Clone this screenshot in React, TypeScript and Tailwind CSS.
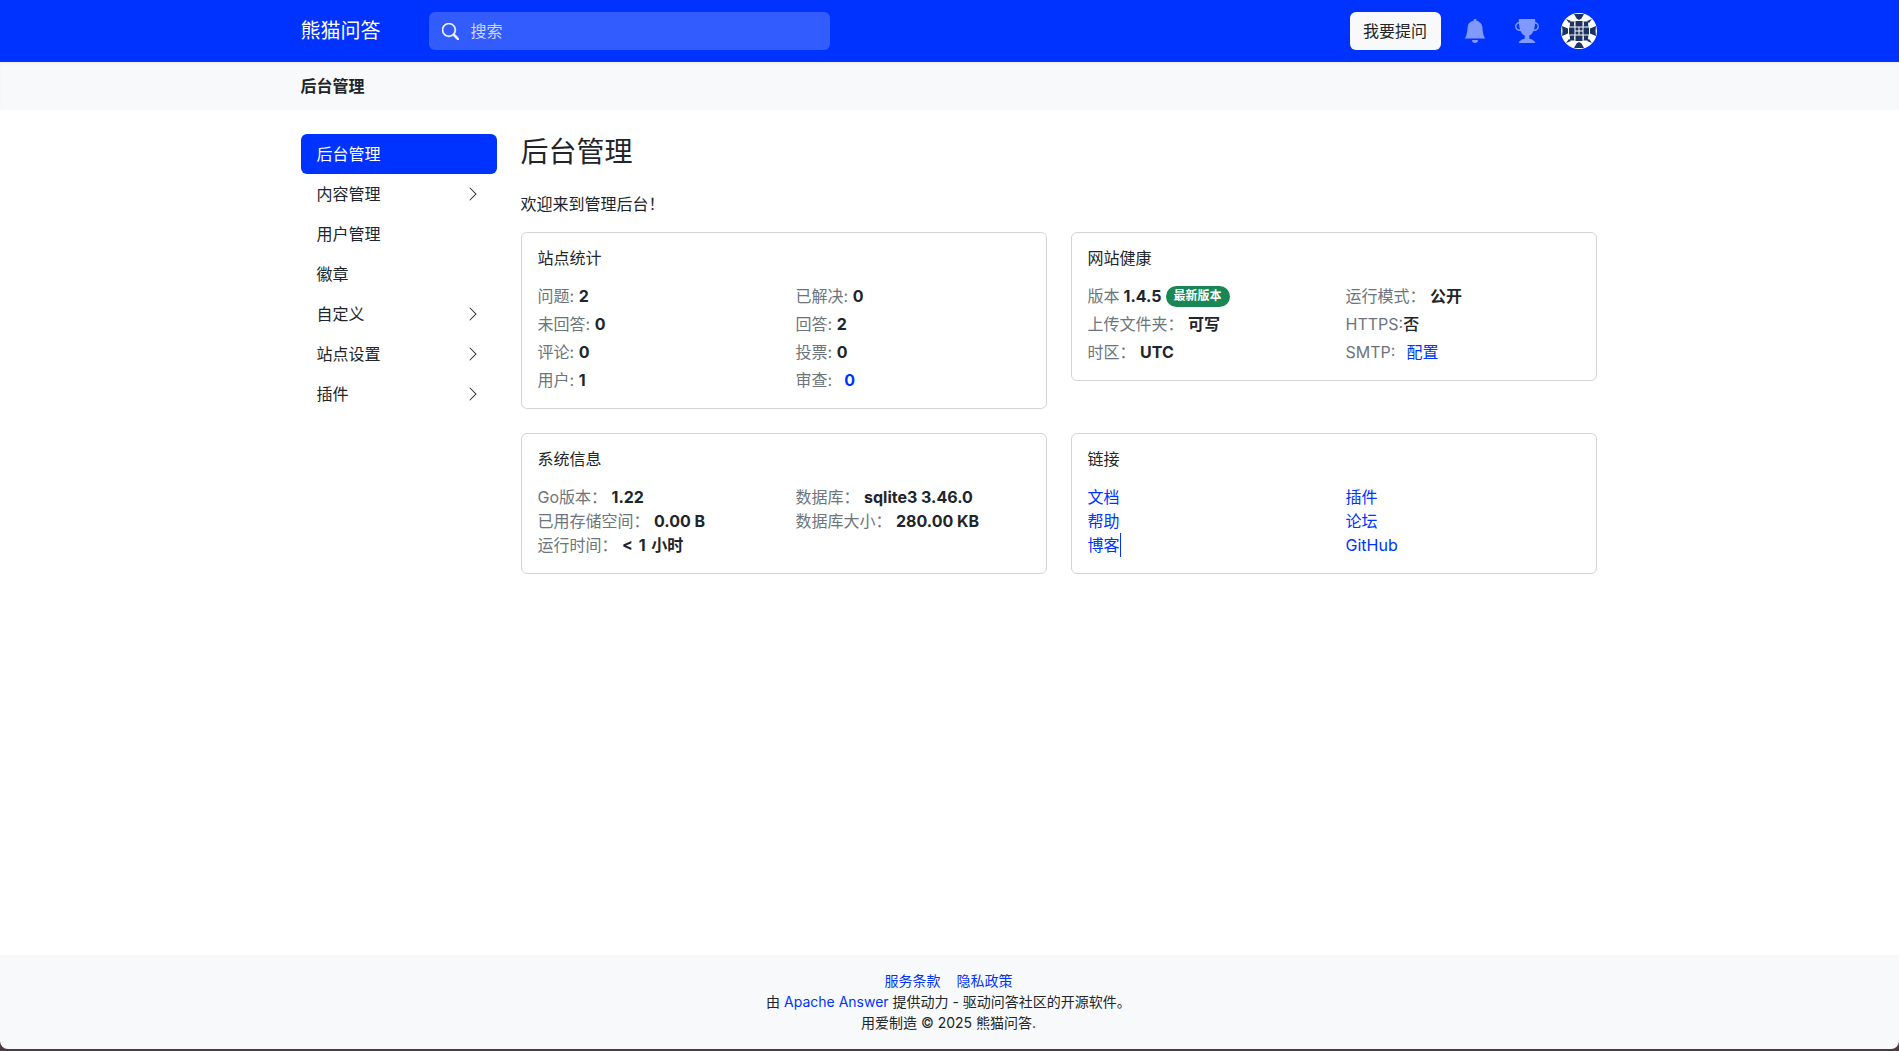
import { BsBellFill, BsChevronRight, BsSearch, BsTrophyFill } from "react-icons/bs";

const sideItems = [
  { label: "后台管理", active: true },
  { label: "内容管理", more: true },
  { label: "用户管理" },
  { label: "徽章" },
  { label: "自定义", more: true },
  { label: "站点设置", more: true },
  { label: "插件", more: true },
];

function Avatar() {
  // quilt style identicon, one quadrant mirrored four times
  const quadrant = (
    <g fill="#1d3461">
      <path d="M13 1h5v6l-2.5-1.5z" />
      <path d="M1 13l6 2.5V18H1.5z" />
      <path d="M5 6l5 2-2 2z" />
      <path d="M8.5 8.5h5l-.5 2.5.5 2.5h-5l.5-2.5z" />
      <path d="M14.5 8h3.5v5.5h-3.5z" />
      <path d="M8 14.5h5.5V18H8z" />
      <path d="M14.5 14.5h3v3h-3z" />
    </g>
  );
  return (
    <svg viewBox="0 0 36 36" className="w-9 h-9 rounded-full bg-white shrink-0">
      {quadrant}
      <g transform="matrix(-1 0 0 1 36 0)">{quadrant}</g>
      <g transform="matrix(1 0 0 -1 0 36)">{quadrant}</g>
      <g transform="matrix(-1 0 0 -1 36 36)">{quadrant}</g>
    </svg>
  );
}

function Card({ title, children }: { title: string; children: React.ReactNode }) {
  return (
    <div className="border border-[#d3d4d5] rounded-md p-4">
      <h6 className="text-base leading-[19.2px] font-normal mb-4">{title}</h6>
      {children}
    </div>
  );
}

function Stat({ label, value, gap }: { label: string; value: React.ReactNode; gap?: boolean }) {
  return (
    <div className="leading-6">
      <span className="text-[#6c757d]">{label}</span>
      {gap ? <span className="inline-block w-3" /> : " "}
      <strong className="font-bold">{value}</strong>
    </div>
  );
}

export default function App() {
  return (
    <div className="[font-family:Inter,'Noto_Sans_CJK_SC',sans-serif] min-h-[1051px] flex flex-col bg-white text-[#212529] text-base overflow-hidden">
      <header className="h-[62px] bg-[#0033ff] shrink-0">
        <div className="w-[1320px] ml-[288.5px] px-3 h-full flex items-center">
          <a className="text-white text-xl w-[128px]">熊猫问答</a>
          <div className="w-[401px] h-[38px] bg-[#335cff] rounded-md flex items-center pl-[13px]">
            <BsSearch className="w-[17px] h-[17px] text-white stroke-[0.5]" />
            <span className="ml-[12px] text-[#ccd6ff]">搜索</span>
          </div>
          <div className="ml-auto flex items-center">
            <button className="h-[38px] w-[91px] bg-[#f8f9fa] rounded-md text-[#212529]">我要提问</button>
            <BsBellFill className="w-6 h-6 text-[#8099ff] ml-[22px]" />
            <BsTrophyFill className="w-6 h-6 text-[#8099ff] ml-[28px]" />
            <div className="ml-[22px]">
              <Avatar />
            </div>
          </div>
        </div>
      </header>

      <div className="h-12 bg-[#f8f9fa] shrink-0 shadow-[inset_0_2px_2px_rgba(0,0,0,0.03)]">
        <div className="w-[1320px] ml-[288.5px] px-3 h-full flex items-center font-semibold">后台管理</div>
      </div>

      <main className="flex-1 w-[1320px] ml-[288.5px] px-3 pt-6 flex">
        <nav className="w-[196px] shrink-0 mr-6">
          {sideItems.map((item) => (
            <div
              key={item.label}
              className={`h-10 px-4 rounded-md flex items-center justify-between ${
                item.active ? "bg-[#0033ff] text-white" : ""
              }`}
            >
              <span>{item.label}</span>
              {item.more && <BsChevronRight className="w-4 h-4" />}
            </div>
          ))}
        </nav>

        <div className="flex-1">
          <h3 className="text-[28px] leading-[36px] font-normal mb-[22px]">后台管理</h3>
          <p className="leading-6 mb-4">欢迎来到管理后台！</p>

          <div className="grid grid-cols-2 gap-x-6 gap-y-6 items-start">
            <Card title="站点统计">
              <div className="grid grid-cols-[258px_1fr] gap-y-1">
                <Stat label="问题:" value="2" />
                <Stat label="已解决:" value="0" />
                <Stat label="未回答:" value="0" />
                <Stat label="回答:" value="2" />
                <Stat label="评论:" value="0" />
                <Stat label="投票:" value="0" />
                <Stat label="用户:" value="1" />
                <Stat label="审查:" gap value={<a className="text-[#0033ff]">0</a>} />
              </div>
            </Card>

            <Card title="网站健康">
              <div className="grid grid-cols-[258px_1fr] gap-y-1">
                <div className="leading-6 flex items-center">
                  <span className="text-[#6c757d]">版本</span>
                  <strong className="ml-1 font-bold">1.4.5</strong>
                  <span className="ml-1 h-[21px] px-2 rounded-full bg-[#198754] text-white text-xs font-bold flex items-center">
                    最新版本
                  </span>
                </div>
                <Stat label="运行模式：" value="公开" />
                <Stat label="上传文件夹：" value="可写" />
                <div className="leading-6">
                  <span className="text-[#6c757d]">HTTPS:</span>
                  <strong className="font-medium">否</strong>
                </div>
                <Stat label="时区：" value="UTC" />
                <div className="leading-6">
                  <span className="text-[#6c757d]">SMTP:</span>
                  <a className="ml-[11px] text-[#0033ff]">配置</a>
                </div>
              </div>
            </Card>

            <Card title="系统信息">
              <div className="grid grid-cols-[258px_1fr]">
                <Stat label="Go版本：" value="1.22" />
                <Stat label="数据库：" value="sqlite3 3.46.0" />
                <Stat label="已用存储空间：" value="0.00 B" />
                <Stat label="数据库大小：" value="280.00 KB" />
                <Stat label="运行时间：" value={<span className="[word-spacing:2px]">&lt; 1 小时</span>} />
              </div>
            </Card>

            <Card title="链接">
              <div className="grid grid-cols-[258px_1fr] leading-6 text-[#0033ff]">
                <a>文档</a>
                <a>插件</a>
                <a>帮助</a>
                <a>论坛</a>
                <a className="w-fit border-r border-[#0033ff]">博客</a>
                <a>GitHub</a>
              </div>
            </Card>
          </div>
        </div>
      </main>

      <div className="bg-[#4b3a42] pb-[2px] shrink-0">
        <footer className="bg-[#f8f9fa] h-[94px] rounded-b-lg pt-[15px] pr-[2px] text-sm leading-[21px] text-center">
          <div className="text-[#0033ff]">
            <a>服务条款</a>
            <a className="ml-4">隐私政策</a>
          </div>
          <div>
            由 <a className="text-[#0033ff]">Apache Answer</a> 提供动力 - 驱动问答社区的开源软件。
          </div>
          <div>用爱制造 © 2025 熊猫问答.</div>
        </footer>
      </div>
    </div>
  );
}
